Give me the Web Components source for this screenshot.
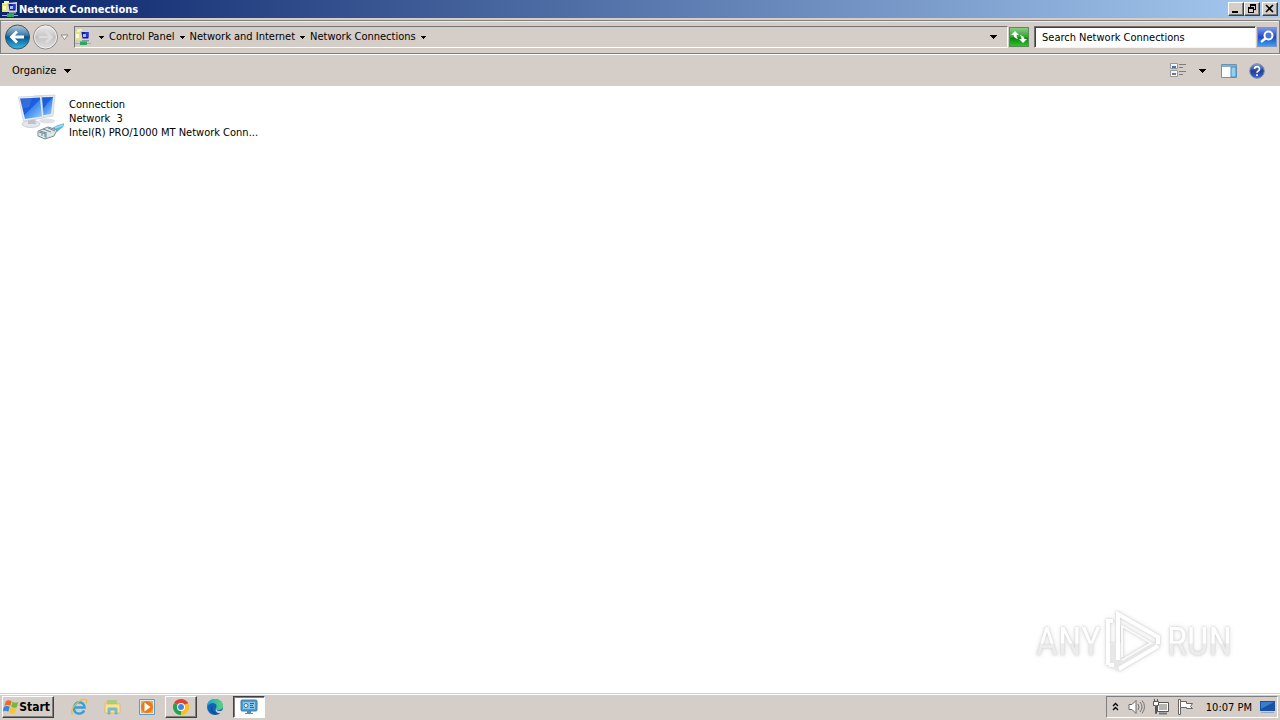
<!DOCTYPE html>
<html lang="en">
<head>
<meta charset="utf-8">
<title>Network Connections</title>
<style>
html, body { margin: 0; height: 100%; }
body { font: 11px/14px "DejaVu Sans Condensed", Tahoma, "Noto Sans", sans-serif; color: #000; background: #fff; overflow: hidden;
  --face: #d5cec8; --shadow: #808080; --ui: "DejaVu Sans Condensed", Tahoma, "Noto Sans", sans-serif; }
</style>
</head>
<body>
<desktop-screen></desktop-screen>
<script>
const define = (name, html) => customElements.define(name, class extends HTMLElement {
  constructor() {
    super();
    const t = document.createElement('template');
    t.innerHTML = html;
    this.attachShadow({ mode: 'open' }).append(t.content.cloneNode(true));
  }
});

const netIcon = `<svg viewBox="0 0 16 16" width="16" height="16" aria-hidden="true">
<path d="M0 2h7v9H0z" fill="#e9e37c"/><path d="M2 0h5v3H2z" fill="#f8f4a8"/><path d="M1 5h3v4H1z" fill="#fffbd0"/>
<path d="M5 2l10-1v10H6z" fill="#ccd4e4"/><path d="M6.500 3h7v6.500h-6z" fill="#1818a0"/><path d="M10 3h3.500v5H10z" fill="#2838c8"/><path d="M8 5h3v3H8z" fill="#a8c0f8"/>
<path d="M7 11h7v1.500H7z" fill="#90989c"/><path d="M0 14h16v1H0z" fill="#7cc8a0"/><path d="M5 12.500h7V16H5z" fill="#28a860"/></svg>`;

define('drop-arrow', `<style>:host{display:block;flex:none;width:7px;height:4px}svg{display:block}</style>
<svg width="7" height="4" viewBox="0 0 7 4" shape-rendering="crispEdges" aria-hidden="true"><path d="M0 0h7v1H6v1H5v1H4v1H3V3H2V2H1V1H0z"/></svg>`);

define('crumb-arrow', `<style>:host{display:block;flex:none;width:5px;height:3px}svg{display:block}</style>
<svg width="5" height="3" viewBox="0 0 5 3" shape-rendering="crispEdges" aria-hidden="true"><path d="M0 0h5v1H4v1H3v1H2V2H1V1H0z"/></svg>`);

define('title-bar', `<style>
:host{display:flex;align-items:center;height:18px;padding:0 2px;background:linear-gradient(90deg,#0a246a,#a6caf0);color:#fff;flex:none}
h1{font:bold 11px/14px var(--ui);margin:0 auto 0 1px;padding-top:2px}
svg{display:block}
button{width:16px;height:14px;padding:0;background:var(--face);border:1px solid;border-color:#fff #404040 #404040 #fff;box-shadow:inset -1px -1px var(--shadow);display:grid;place-items:center}
.close{margin-left:2px}
</style>${netIcon}<h1>Network Connections</h1>
<button aria-label="Minimize"><svg width="12" height="10"><path d="M2 7h6v2H2z"/></svg></button>
<button aria-label="Restore"><svg width="12" height="10" shape-rendering="crispEdges"><path d="M4 0h6v6H8V5h1V2H5v1H4zM2 3h6v6H2zM3 5v3h4V5z" fill-rule="evenodd"/></svg></button>
<button class="close" aria-label="Close"><svg width="12" height="10"><path d="M2 1l7 7M9 1L2 8" stroke="#000" stroke-width="1.6"/></svg></button>`);

define('nav-bar', `<style>
:host{display:flex;align-items:center;height:32px;padding:0 2px 0 3px;margin-top:2px;background:var(--face);border:1px solid var(--shadow);box-shadow:0 1px #fff,inset 0 1px #f0ece8;box-sizing:content-box;flex:none}
button{padding:0;border:0;background:none;display:block;flex:none}
svg{display:block}
.next{margin-left:1px}.hist{margin:0 5px 0 1px}
.address{flex:1;display:flex;align-items:center;height:20px;border:1px solid;border-color:#707474 #fff #fff #707474;padding-right:10px;min-width:0}
.address>svg{margin-right:8px}
ol{display:flex;align-items:center;list-style:none;margin:0 auto 0 0;padding:0}
li{display:flex;align-items:center}
a{color:inherit;text-decoration:none;margin:0 5px;line-height:14px}
.refresh{margin:0 5px 0 1px}
input{width:222px;height:22px;box-sizing:border-box;font:inherit;color:#000;padding:0 7px;border:1px solid;border-color:#707070 #f4f4f4 #f4f4f4 #707070;box-shadow:inset 1px 1px #404040;background:#fff;border-radius:0;flex:none}
input::placeholder{color:#000;opacity:1}
.go{margin-left:1px}
</style>
<button aria-label="Back"><svg width="27" height="28" viewBox="0 0 27 28"><defs><linearGradient id="b" x2="0" y2="1"><stop stop-color="#b8ccdc"/><stop offset=".42" stop-color="#3e7ca8"/><stop offset=".5" stop-color="#07568c"/><stop offset="1" stop-color="#38bce8"/></linearGradient></defs><circle cx="13.500" cy="14" r="12" fill="url(#b)" stroke="#35566c"/><path d="M20 14H8M13 8.500L7.500 14l5.500 5.500" fill="none" stroke="#fff" stroke-width="2.800"/></svg></button>
<button class="next" aria-label="Forward" disabled><svg width="27" height="28" viewBox="0 0 27 28"><defs><linearGradient id="f" x2="0" y2="1"><stop stop-color="#f0efed"/><stop offset=".5" stop-color="#c4c3c2"/><stop offset="1" stop-color="#e0dfdd"/></linearGradient></defs><circle cx="13.500" cy="14" r="12" fill="url(#f)" stroke="#868686"/><circle cx="13.500" cy="14" r="11" fill="none" stroke="#eee"/><path d="M7 14h12M14 8.500l5.500 5.500-5.500 5.500" fill="none" stroke="#dddcda" stroke-width="2.500"/></svg></button>
<button class="hist" aria-label="Recent pages"><svg width="9" height="7" viewBox="0 0 9 7"><path d="M1 1h7L4.500 5.500z" fill="#fff" stroke="#8c8884"/></svg></button>
<nav class="address" aria-label="Address">${netIcon}
<ol><li><crumb-arrow></crumb-arrow></li><li><a href="#control-panel">Control Panel</a><crumb-arrow></crumb-arrow></li><li><a href="#network-internet">Network and Internet</a><crumb-arrow></crumb-arrow></li><li><a href="#network-connections">Network Connections</a><crumb-arrow></crumb-arrow></li></ol>
<button aria-label="Previous locations"><drop-arrow></drop-arrow></button></nav>
<button class="refresh" aria-label="Refresh"><svg width="20" height="20" viewBox="0 0 20 20"><defs><linearGradient id="r" x2="0" y2="1"><stop stop-color="#8bd284"/><stop offset=".5" stop-color="#35a035"/><stop offset=".55" stop-color="#0b860e"/><stop offset="1" stop-color="#35c530"/></linearGradient></defs><rect x=".5" y=".5" width="19" height="19" fill="url(#r)" stroke="#5a8a5a"/><path d="M2 8l4-4 4 4H7.500q0 2 1.500 4-4-1-4.500-4zM18 12l-4 4-4-4h2.500q0-2-1.500-4 4 1 4.500 4z" fill="#fff"/></svg></button>
<input type="text" aria-label="Search Network Connections" placeholder="Search Network Connections">
<button class="go" aria-label="Search"><svg width="20" height="20" viewBox="0 0 20 20"><defs><linearGradient id="s" x2="0" y2="1"><stop stop-color="#7d9bea"/><stop offset=".5" stop-color="#2446c8"/><stop offset="1" stop-color="#35a8ee"/></linearGradient></defs><rect x=".5" y=".5" width="19" height="19" fill="url(#s)" stroke="#7f95c6"/><path d="M9 11l-5 4" stroke="#fff" stroke-width="2.500"/><circle cx="11.500" cy="8.500" r="4" fill="#4a74dd" stroke="#fff" stroke-width="2"/></svg></button>`);

define('command-bar', `<style>
:host{display:flex;align-items:center;height:31px;padding:0 15px 0 12px;background:var(--face);margin-top:1px;flex:none}
button{font:inherit;color:inherit;padding:0;border:0;background:none;display:flex;align-items:center;gap:8px}
svg{display:block}
.organize{margin-right:auto}.more{margin:0 15px 0 12px}.help{margin-left:12px}
</style>
<button class="organize">Organize<drop-arrow></drop-arrow></button>
<button aria-label="Change view"><svg width="17" height="16" viewBox="0 0 17 16"><g fill="#f4f6fa" stroke="#999"><path d="M.5.500h7v5h-7zM.5 7.500h7v6h-7z"/></g><path d="M2 3h4v2H2z" fill="#3978b8"/><path d="M2 10h4v2H2z" fill="#707884"/><path d="M9 1.500h7M9 4.500h4M9 8.500h7M9 11.500h4" stroke="#7c7c7c"/></svg></button>
<button class="more" aria-label="More view options"><drop-arrow></drop-arrow></button>
<button aria-label="Preview pane"><svg width="16" height="14" viewBox="0 0 16 14"><path d="M.5.500h15v13H.5z" fill="#fff" stroke="#6f93ac"/><path d="M1 1h14v2H1z" fill="#80b1d4"/><path d="M10 3h5v10h-5z" fill="#91d0ef" stroke="#4d8cb2"/></svg></button>
<button class="help" aria-label="Help"><svg width="16" height="16" viewBox="0 0 16 16"><defs><linearGradient id="h" x2="0" y2="1"><stop stop-color="#7e9cdc"/><stop offset=".5" stop-color="#1f3f9c"/><stop offset="1" stop-color="#3c66d0"/></linearGradient></defs><circle cx="8" cy="8" r="7.300" fill="url(#h)" stroke="#8090b0"/><path d="M5.500 6q.2-2.300 2.600-2.300T10.500 6q0 1.200-1.300 1.900T8 9.800M8 11.300v1.700" fill="none" stroke="#fff" stroke-width="1.700"/></svg></button>`);

define('connection-tile', `<style>
:host{display:flex;width:250px;gap:5px}
svg{display:block;flex:none}
div{min-width:0;padding-top:5px}
p{margin:0;line-height:14px;white-space:pre}
</style>
<svg width="48" height="48" viewBox="0 0 48 48" aria-hidden="true"><defs><linearGradient id="m" x2="1" y2="1"><stop stop-color="#1550cf"/><stop offset=".5" stop-color="#1c62e0"/><stop offset=".51" stop-color="#3a86ee"/><stop offset="1" stop-color="#9cd0ff"/></linearGradient></defs>
<ellipse cx="31" cy="28" rx="8" ry="2.500" fill="#dfe2e6"/><path d="M18 3l21-1-2 21-17 3z" fill="#e6eaed" stroke="#c4cad0" stroke-width=".7"/><path d="M20 4.500l17-.5-2 17-14 2z" fill="url(#m)"/>
<ellipse cx="15" cy="31" rx="9" ry="3.500" fill="#e4e7ea" stroke="#bcc1c7" stroke-width=".7"/><path d="M12 26h7l1 5h-8z" fill="#bac2cb"/><path d="M2.500 4l23-1 2 22-20 3z" fill="#f0f2f4" stroke="#c2cad2" stroke-width=".7"/><path d="M4 5.500l20-1 2 19-17 2.500z" fill="url(#m)"/><path d="M4 5.500l12-.6-3 9-8 2z" fill="#fff" opacity=".12"/>
<path d="M34 36l8-4 7-2-2 4-6 5z" fill="#64b4dc"/><path d="M22 38l10-4 9 3-3 6-9 3-7-3z" fill="#dde6e8" stroke="#788e98"/><path d="M23 39l7 2v4m2-10l7 3m-12-2l8 3m-11-1l7 2m-5 0v3m3-2v3" stroke="#708a96" fill="none"/><path d="M39 35l8-3" stroke="#a0def5" stroke-width="1.500"/></svg>
<div><p>Connection</p><p>Network  3</p><p>Intel(R) PRO/1000 MT Network Conn...</p></div>`);

define('any-run-mark', `<style>
:host{position:absolute;right:48px;bottom:20px;display:flex;align-items:center;gap:4px;font:38px/60px "Liberation Sans Narrow","Roboto Condensed","DejaVu Sans Condensed",sans-serif;color:#fff;filter:drop-shadow(0 0 1px #ccc) drop-shadow(0 0 2px #e4e4e4)}
span{background:linear-gradient(#fff 52%,#ececec 53%);background-clip:text;-webkit-background-clip:text;color:transparent}
svg{display:block}
</style><span>ANY</span>
<svg width="58" height="62" viewBox="0 0 58 62" aria-hidden="true"><path d="M2 32h15v17L44 32h11v4L14 60 2 54z" fill="#f2f2f2" opacity=".6"/><path d="M13 49V3L53 26v7M14 58l39-23M3 54V10h5M4 54h5" fill="none" stroke="#fff" stroke-width="4"/><path d="M17 46V15l29 17-29 17" fill="none" stroke="#fafafa" stroke-width="2"/></svg><span>RUN</span>`);

define('folder-view', `<style>:host{display:block;flex:1;position:relative;background:#fff;min-height:0;padding:7px 16px}</style><connection-tile></connection-tile><any-run-mark></any-run-mark>`);

define('task-button', `<style>
:host{display:block;flex:none}
button{display:flex;align-items:center;justify-content:center;width:32px;height:22px;padding:0;border:1px solid transparent;background:none;box-sizing:border-box}
:host([raised]) button{border-color:#fff #404040 #404040 #fff;box-shadow:inset -1px -1px #808080}
:host([pressed]) button{border-color:#404040 #fff #fff #404040;box-shadow:inset 1px 1px #808080;background:#fff}
</style><button><slot></slot></button>`);

define('task-bar', `<style>
:host{display:flex;align-items:center;height:26px;padding:0 2px;background:var(--face);border-top:1px solid var(--face);box-shadow:inset 0 1px #fff;flex:none}
svg{display:block}
.start{display:flex;align-items:center;width:52px;height:22px;box-sizing:border-box;padding:0 3px 0 0;font:bold 12px/14px var(--ui);border:1px solid;border-color:#fff #404040 #404040 #fff;box-shadow:inset -1px -1px #808080;background:var(--face);color:#000}
.apps{display:flex;gap:2px;margin:0 auto 0 9px}
.tray{display:flex;align-items:center;height:20px;border:1px solid;border-color:#808080 #fff #fff #808080;padding:0 1px 0 5px}
.tray button{padding:0;border:0;background:none}
.tray .snd{margin-left:9px}.tray .net,.tray .flag{margin-left:8px}
time{margin:0 8px 0 12px;padding-top:2px}
</style>
<button class="start"><svg width="17" height="16" viewBox="0 0 17 16"><path d="M3 2q3-2 6 0L7.500 7Q5 5 1.500 7z" fill="#ed6928"/><path d="M10 2.500q3 2 6 0L14.500 8q-3 2-6-.5z" fill="#75b83c"/><path d="M1 8q3-2 6 0L5.500 13q-3-2-6 0z" fill="#3985d5"/><path d="M8 8.500q3 2 6 0L12.500 14q-3 2-6-.5z" fill="#f7c52c"/></svg>Start</button>
<div class="apps">
<task-button title="Internet Explorer"><svg width="18" height="18" viewBox="0 0 18 18"><path d="M5 9.500h9.500C14.500 2.500 4 2.500 4 10c0 7 8 7 10.200 2.500" fill="none" stroke="#35a0dc" stroke-width="2.400"/><path d="M2.500 16.500C-1 11 10 0 16 1.500q2 1 0 4" fill="none" stroke="#e9bd36" stroke-width="1.200"/></svg></task-button>
<task-button title="Windows Explorer"><svg width="18" height="18" viewBox="0 0 18 18"><path d="M2 3h5l1 2h7v10H2z" fill="#efcf65"/><path d="M3 2h10v5H3z" fill="#a8cc80"/><path d="M1 6h15v9H1z" fill="#f8e391" stroke="#d9b85b" stroke-width=".7"/><path d="M4 16v-5q0-1 1-1h7q1 0 1 1v5h-2v-4H6v4z" fill="#83c7e9" stroke="#5597bd" stroke-width=".6"/></svg></task-button>
<task-button title="Media Player"><svg width="18" height="18" viewBox="0 0 18 18"><path d="M1.500 1.500h15v15h-15z" fill="#d8edf7" stroke="#5d9ccc"/><path d="M3 3h12v12H3z" fill="#f4a850"/><circle cx="9" cy="9" r="6" fill="#ee7917"/><path d="M6.500 4.500l6 4.500-6 4.500z" fill="#fff"/></svg></task-button>
<task-button raised title="Chrome"><svg width="18" height="18" viewBox="0 0 18 18"><path d="M9 9L2.070 5A8 8 0 0 1 15.930 5z" fill="#e34133"/><path d="M9 9L15.930 5A8 8 0 0 1 9 17z" fill="#fbc116"/><path d="M9 9v8A8 8 0 0 1 2.070 5z" fill="#28a149"/><path d="M9 5h6.930" stroke="#e34133"/><circle cx="9" cy="9" r="4" fill="#fff"/><circle cx="9" cy="9" r="3" fill="#4285e8"/></svg></task-button>
<task-button title="Edge"><svg width="18" height="18" viewBox="0 0 18 18"><defs><linearGradient id="e"><stop stop-color="#18a5d5"/><stop offset="1" stop-color="#5bd477"/></linearGradient></defs><circle cx="9" cy="9" r="8" fill="#1263b7"/><path d="M1 9C1-2 17-1 17 8q0 4-5 4-3 0-2-2 2-4-3-5-4 0-6 4z" fill="url(#e)"/><path d="M7 7q-3 6 3 8 3 1 5-1l-1 1q-7 3-9-2-1-4 2-6z" fill="#0b4f98"/><path d="M10 11q1 3 6 1.500l1 1L15.500 15q-5 1-6-3z" fill="#d5cec8"/></svg></task-button>
<task-button pressed title="Network Connections"><svg width="18" height="16" viewBox="0 0 18 16"><rect x="1" y="1" width="16" height="11" rx="1" fill="#4f9bd0" stroke="#417fa7"/><path d="M3 3h12v7H3z" fill="#8ac8ea"/><circle cx="6" cy="6.500" r="2" fill="#e7f6ff" stroke="#31739d"/><path d="M10 4.500h4M10 6.500h3M10 8.500h4" stroke="#28648c"/><path d="M7 12h4v2h2v1H5v-1h2z" fill="#4c8fb9"/></svg></task-button>
</div>
<div class="tray">
<button aria-label="Show hidden icons"><svg width="7" height="10" viewBox="0 0 7 10"><path d="M1 4l2.500-2.500L6 4M1 8l2.500-2.500L6 8" fill="none" stroke="#000" stroke-width="1.300"/></svg></button>
<button class="snd" aria-label="Volume"><svg width="17" height="16" viewBox="0 0 17 16"><path d="M1 5.500h3l4-4v13l-4-4H1z" fill="#fff" stroke="#686868"/><path d="M10 5q2 3 0 6M12 3q4 5 0 10M14 1.500q5 6 0 13" fill="none" stroke="#777"/></svg></button>
<button class="net" aria-label="Network"><svg width="16" height="16" viewBox="0 0 16 16"><path d="M4.500 3.500h11v9h-11z" fill="#fff" stroke="#555"/><path d="M6 5h8v6H6z" fill="#b8b4b0"/><path d="M6 14.500h8" stroke="#777" stroke-width="2"/><path d="M.5 2.500h5v4h-2v8h-1v-8h-2z" fill="#fff" stroke="#555"/><path d="M1.500 0v3M4.500 0v3" stroke="#555"/></svg></button>
<button class="flag" aria-label="Action Center"><svg width="17" height="16" viewBox="0 0 17 16"><path d="M1.500.500h2v15h-2z" fill="#fff" stroke="#666"/><path d="M3.500 2.500h6v2h6l-2 3 2 2h-6v-1h-6z" fill="#fff" stroke="#666"/></svg></button>
<time datetime="22:07">10:07 PM</time>
<button aria-label="Show desktop"><svg width="16" height="14" viewBox="0 0 16 14"><path d="M0 1h15v10H0z" fill="#1b50a4"/><path d="M1 2h13L1 9z" fill="#397dd0"/><path d="M1 12h13v1H1z" fill="#8fa8c8"/></svg></button>
</div>`);

define('desktop-screen', `<style>:host{display:flex;flex-direction:column;height:100vh;background:var(--face)}</style>
<title-bar></title-bar><nav-bar></nav-bar><command-bar></command-bar><folder-view></folder-view><task-bar></task-bar>`);
</script>
</body>
</html>
